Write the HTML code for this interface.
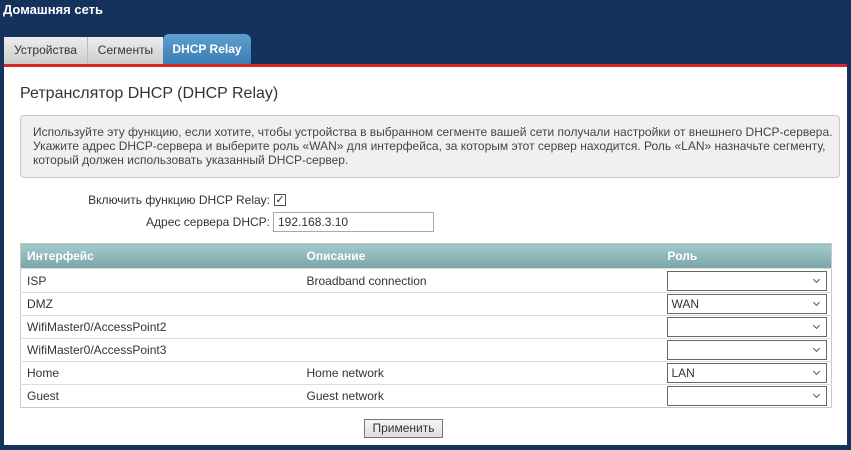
<!DOCTYPE html>
<html><head><meta charset="utf-8"><style>
body{margin:0;width:851px;height:450px;background:#14325c;font-family:"Liberation Sans",Arial,sans-serif;position:relative;overflow:hidden;font-size:12px;color:#333}
.abs{position:absolute}
.title{left:3px;top:2px;color:#fff;font-weight:bold;font-size:13px}
.tab{top:37px;height:27px;line-height:26px;font-size:12px;box-sizing:border-box;text-align:center}
.t1{left:4px;width:84px;background:linear-gradient(#eee,#ccc);border-right:1px solid #bbb;color:#333}
.t2{left:88px;width:75px;background:linear-gradient(#eee,#ccc);color:#333}
.t3{left:163px;width:88px;background:linear-gradient(#5f9fcf,#3b7cb3);color:#fff;font-weight:bold;border-radius:6px 6px 0 0;top:34px;height:30px;line-height:30px}
.red{left:4px;top:64px;width:843px;height:3px;background:#d8252a}
.panel{left:4px;top:67px;width:843px;height:378px;background:#fff}
h1{position:absolute;left:20px;top:85px;margin:0;font-size:16px;font-weight:normal;color:#333}
.info{left:20px;top:115px;width:820px;height:63px;background:#f0f0f0;border:1px solid #c8c8c8;border-radius:4px;box-sizing:border-box;padding:9px 0 0 12px;line-height:14px;color:#444;white-space:nowrap;font-size:12px}
.lbl{text-align:right;width:260px;left:10px}
table{position:absolute;left:20px;top:243px;width:812px;border-collapse:collapse;border:1px solid #c8c8c8;table-layout:fixed}
th{background:linear-gradient(#a3cbcd,#7aa4a7);color:#fff;text-align:left;height:25px;padding:0 6px;font-size:12px;box-sizing:border-box}
td{height:22px;border-top:1px solid #ddd;padding:0 6px;color:#333;white-space:nowrap}
tr.f td{height:23px}
.sel{width:160px;height:20px;border:1px solid #666;box-sizing:border-box;position:relative;padding-left:4px;line-height:18px;margin-left:-1px;color:#333}
.sel:after{content:"";position:absolute;right:7px;top:5px;width:4px;height:4px;border-right:1px solid #555;border-bottom:1px solid #555;transform:rotate(45deg)}
</style></head><body>
<div class="abs title">Домашняя сеть</div>
<div class="abs tab t1">Устройства</div>
<div class="abs tab t2">Сегменты</div>
<div class="abs tab t3">DHCP Relay</div>
<div class="abs red"></div>
<div class="abs panel"></div>
<h1>Ретранслятор DHCP (DHCP Relay)</h1>
<div class="abs info">Используйте эту функцию, если хотите, чтобы устройства в выбранном сегменте вашей сети получали настройки от внешнего DHCP-сервера.<br>Укажите адрес DHCP-сервера и выберите роль «WAN» для интерфейса, за которым этот сервер находится. Роль «LAN» назначьте сегменту,<br>который должен использовать указанный DHCP-сервер.</div>
<div class="abs lbl" style="top:193px">Включить функцию DHCP Relay:</div>
<div class="abs" style="left:274px;top:194px;width:12px;height:12px;border:1px solid #555;box-sizing:border-box;font-size:11px;line-height:10px;text-align:center">✓</div>
<div class="abs lbl" style="top:215px">Адрес сервера DHCP:</div>
<div class="abs" style="left:273px;top:212px;width:161px;height:20px;border:1px solid #aaa;box-sizing:border-box;padding:2px 4px">192.168.3.10</div>
<table>
<tr><th style="width:280px">Интерфейс</th><th style="width:361px">Описание</th><th>Роль</th></tr>
<tr class="f"><td>ISP</td><td>Broadband connection</td><td><div class="sel"></div></td></tr>
<tr><td>DMZ</td><td></td><td><div class="sel">WAN</div></td></tr>
<tr><td>WifiMaster0/AccessPoint2</td><td></td><td><div class="sel"></div></td></tr>
<tr><td>WifiMaster0/AccessPoint3</td><td></td><td><div class="sel"></div></td></tr>
<tr><td>Home</td><td>Home network</td><td><div class="sel">LAN</div></td></tr>
<tr><td>Guest</td><td>Guest network</td><td><div class="sel"></div></td></tr>
</table>
<div class="abs" style="left:364px;top:419px;width:79px;height:19px;border:1px solid #777;box-sizing:border-box;background:linear-gradient(#f6f6f6,#ddd);text-align:center;line-height:17px;color:#333">Применить</div>
</body></html>
